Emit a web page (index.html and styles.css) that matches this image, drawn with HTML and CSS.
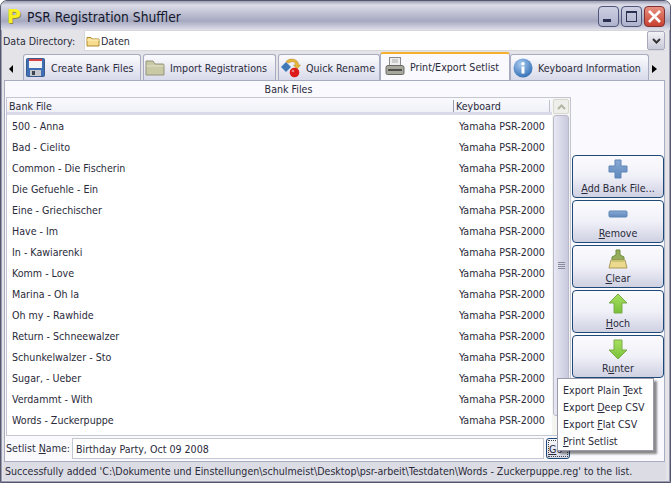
FILE: index.html
```html
<!DOCTYPE html>
<html lang="en">
<head>
<meta charset="utf-8">
<title>PSR Registration Shuffler</title>
<link rel="stylesheet" href="styles.css">
</head>
<body>
<div class="window">
  <header class="titlebar">
    <span class="app-logo">P</span>
    <span class="app-title">PSR Registration Shuffler</span>
    <div class="win-buttons">
      <span class="win-btn"><svg width="21" height="21" viewBox="0 0 21 21"><rect x="5" y="13" width="8" height="3" fill="#2a3050"/></svg></span>
      <span class="win-btn"><svg width="21" height="21" viewBox="0 0 21 21"><rect x="5.5" y="5.5" width="10" height="10" fill="none" stroke="#2a3050"/><rect x="5" y="5" width="11" height="2" fill="#2a3050"/></svg></span>
      <span class="win-btn close"><svg width="21" height="21" viewBox="0 0 21 21"><path d="M5 5l11 11M16 5L5 16" stroke="#fff" stroke-width="2.6"/></svg></span>
    </div>
  </header>
  <div class="dir-row">
    <span class="dir-label">Data Directory:</span>
    <div class="dir-combo">
      <svg class="dir-folder" width="14" height="12" viewBox="0 0 14 12"><path d="M1 2.5h4l1 1.5h7v7H1z" fill="#f6dc8c" stroke="#b08a2c"/><path d="M1 5h12" stroke="#fff3c4"/></svg>
      <span class="dir-value">Daten</span>
      <span class="combo-arrow"><svg width="9" height="6" viewBox="0 0 9 6"><path d="M1 1l3.5 3.5L8 1" fill="none" stroke="#333" stroke-width="2"/></svg></span>
    </div>
  </div>
  <nav class="tabs">
    <span class="tab-scroll"><svg width="5" height="8" viewBox="0 0 5 8"><path d="M4 0v8L0 4z" fill="#000"/></svg></span>
    <div class="tab t1">
      <svg width="19" height="19" viewBox="0 0 19 19"><rect x=".5" y=".5" width="18" height="18" rx="1" fill="#3f6fb5" stroke="#3a5a8c"/><rect x="3" y="1" width="13" height="9" fill="#f4f4f4"/><rect x="3" y="1" width="13" height="2" fill="#d8434a"/><rect x="4" y="12" width="11" height="6" fill="#c4c8cc"/><rect x="6" y="13" width="3" height="4" fill="#3c4450"/></svg>
      <span>Create Bank Files</span>
    </div>
    <div class="tab t2">
      <svg width="20" height="18" viewBox="0 0 20 18"><path d="M1 2h7l2 3h8a1 1 0 0 1 1 1v10H1z" fill="#c9c9a6" stroke="#94947a"/><path d="M1.500 7h17" stroke="#e2e2cc"/></svg>
      <span>Import Registrations</span>
    </div>
    <div class="tab t3">
      <svg width="20" height="20" viewBox="0 0 20 20"><path d="M5 4l5 5-5 5-5-5z" fill="#3f79b8"/><path d="M5 4a6 4 0 0 1 11-1q1.500 1.500 1.500 4l2 0-3.500 4-3.500-4 2 0q0-2-1.500-3a4 3 0 0 0-5 1z" fill="#e6b43a" stroke="#b08828" stroke-width=".5"/><circle cx="13.500" cy="14.500" r="4.800" fill="#dc1a1a"/><circle cx="12" cy="13" r="1.300" fill="#f08080"/></svg>
      <span>Quick Rename</span>
    </div>
    <div class="tab t4 active">
      <svg width="20" height="20" viewBox="0 0 20 20"><rect x="4.500" y="1.500" width="11" height="8" fill="#eee" stroke="#8a8a8a"/><path d="M7 4h6M7 6h6" stroke="#aaa"/><path d="M1 11.500a2 2 0 0 1 2-2h14a2 2 0 0 1 2 2V17a1.500 1.500 0 0 1-1.500 1.500h-15A1.500 1.500 0 0 1 1 17z" fill="#a8a89e" stroke="#6a6a64"/><rect x="3" y="13" width="14" height="2" fill="#50504c"/></svg>
      <span>Print/Export Setlist</span>
    </div>
    <div class="tab t5">
      <svg width="20" height="20" viewBox="0 0 20 20"><defs><radialGradient id="ig" cx="40%" cy="30%" r="75%"><stop offset="0" stop-color="#a9cbef"/><stop offset="1" stop-color="#2f6db5"/></radialGradient></defs><circle cx="10" cy="10" r="9.500" fill="url(#ig)"/><rect x="8.500" y="8.500" width="3" height="7" fill="#fff"/><circle cx="10" cy="5.800" r="1.700" fill="#fff"/></svg>
      <span>Keyboard Information</span>
    </div>
    <span class="tab-scroll right"><svg width="5" height="8" viewBox="0 0 5 8"><path d="M0 0v8l5-4z" fill="#000"/></svg></span>
  </nav>
  <main class="panel">
    <section class="left">
      <div class="group-title">Bank Files</div>
      <div class="listbox">
        <div class="list-main">
          <div class="list-head">
            <span class="col-file">Bank File</span>
            <span class="col-kb">Keyboard</span>
          </div>
          <ul class="rows">
            <li><span>500 - Anna</span><span class="kb">Yamaha PSR-2000</span></li>
            <li><span>Bad - Cielito</span><span class="kb">Yamaha PSR-2000</span></li>
            <li><span>Common - Die Fischerin</span><span class="kb">Yamaha PSR-2000</span></li>
            <li><span>Die Gefuehle - Ein</span><span class="kb">Yamaha PSR-2000</span></li>
            <li><span>Eine - Griechischer</span><span class="kb">Yamaha PSR-2000</span></li>
            <li><span>Have - Im</span><span class="kb">Yamaha PSR-2000</span></li>
            <li><span>In - Kawiarenki</span><span class="kb">Yamaha PSR-2000</span></li>
            <li><span>Komm - Love</span><span class="kb">Yamaha PSR-2000</span></li>
            <li><span>Marina - Oh la</span><span class="kb">Yamaha PSR-2000</span></li>
            <li><span>Oh my - Rawhide</span><span class="kb">Yamaha PSR-2000</span></li>
            <li><span>Return - Schneewalzer</span><span class="kb">Yamaha PSR-2000</span></li>
            <li><span>Schunkelwalzer - Sto</span><span class="kb">Yamaha PSR-2000</span></li>
            <li><span>Sugar, - Ueber</span><span class="kb">Yamaha PSR-2000</span></li>
            <li><span>Verdammt - With</span><span class="kb">Yamaha PSR-2000</span></li>
            <li><span>Words - Zuckerpuppe</span><span class="kb">Yamaha PSR-2000</span></li>
          </ul>
        </div>
        <div class="scrollbar">
          <span class="sb-up"><svg width="9" height="6" viewBox="0 0 9 6"><path d="M1 5l3.500-3.500L8 5" fill="none" stroke="#b5b5a5" stroke-width="2"/></svg></span>
          <span class="sb-thumb"><i></i><i></i><i></i><i></i></span>
        </div>
      </div>
      <div class="setlist-row">
        <label class="setlist-label">Setlist <u>N</u>ame:</label>
        <div class="setlist-input">Birthday Party, Oct 09 2008</div>
        <button class="go-btn"><u>G</u>o</button>
      </div>
    </section>
    <aside class="actions">
      <button class="action">
        <svg width="22" height="22" viewBox="0 0 22 22"><defs><linearGradient id="bl" x1="0" y1="0" x2="0" y2="1"><stop offset="0" stop-color="#8aaad4"/><stop offset="1" stop-color="#5f88bc"/></linearGradient></defs><path d="M8 2h6v6h6v6h-6v6H8v-6H2V8h6z" fill="url(#bl)" stroke="#5f86b8"/></svg>
        <span><u>A</u>dd Bank File...</span>
      </button>
      <button class="action">
        <svg width="22" height="22" viewBox="0 0 22 22"><rect x="2" y="8" width="18" height="6" rx="1" fill="url(#bl)" stroke="#5f86b8"/></svg>
        <span><u>R</u>emove</span>
      </button>
      <button class="action">
        <svg width="22" height="22" viewBox="0 0 22 22"><path d="M9 2h4v5l4 2v3H5V9l4-2z" fill="#96ae5c" stroke="#6f8a3c"/><path d="M4 12h14l2 8H2z" fill="#ecd98e" stroke="#a89a58"/><path d="M5 13h12" stroke="#c8c470" stroke-width="2"/></svg>
        <span><u>C</u>lear</span>
      </button>
      <button class="action">
        <svg width="22" height="22" viewBox="0 0 22 22"><defs><linearGradient id="gr" x1="0" y1="0" x2="0" y2="1"><stop offset="0" stop-color="#a8e060"/><stop offset="1" stop-color="#78c038"/></linearGradient></defs><path d="M11 1l9 9h-5v10H7V10H2z" fill="url(#gr)" stroke="#78ac48"/></svg>
        <span><u>H</u>och</span>
      </button>
      <button class="action">
        <svg width="22" height="22" viewBox="0 0 22 22"><path d="M7 2h8v10h5l-9 9-9-9h5z" fill="url(#gr)" stroke="#78ac48"/></svg>
        <span>R<u>u</u>nter</span>
      </button>
    </aside>
    <div class="menu">
      <div>Export Plain <u>T</u>ext</div>
      <div>Export <u>D</u>eep CSV</div>
      <div>Export <u>F</u>lat CSV</div>
      <div><u>P</u>rint Setlist</div>
    </div>
  </main>
  <footer class="status">
    <span>Successfully added 'C:\Dokumente und Einstellungen\schulmeist\Desktop\psr-arbeit\Testdaten\Words - Zuckerpuppe.reg' to the list.</span>
  </footer>
</div>
</body>
</html>
```
FILE: styles.css
```css
* { box-sizing: border-box; }
html, body { margin: 0; padding: 0; }
body {
  width: 671px;
  height: 483px;
  overflow: hidden;
  background: #fff;
  font-family: "DejaVu Sans Condensed", "DejaVu Sans", sans-serif;
  font-size: 10.6px;
  color: #2a2a3a;
}
u { text-decoration: underline; }
.window {
  width: 671px;
  height: 483px;
  display: flex;
  flex-direction: column;
  padding: 0 5px 2px 3px;
  background: #e4e4e8;
  border: 1px solid #55586c;
  border-radius: 7px 7px 0 0;
  box-shadow: inset 0 0 0 1px #9a9db2;
}
.titlebar {
  height: 29px;
  flex: none;
  margin: 0 -5px 0 -3px;
  padding: 0 5px 0 6px;
  display: flex;
  align-items: center;
  border-radius: 6px 6px 0 0;
  background: linear-gradient(#9c9fb6 0, #dcdde8 4px, #a6a8c0 20px, #dfe0ea 29px);
}
.app-logo {
  width: 18px;
  padding-top: 1px;
  font: bold 19px "DejaVu Sans", sans-serif;
  color: #f8f020;
  text-shadow: 1px 1px 0 #8c8c40;
}
.app-title {
  margin-left: 2px;
  padding-top: 2px;
  font-size: 13.7px;
  color: #14182c;
}
.win-buttons { margin-left: auto; display: flex; gap: 2px; padding-top: 1px; }
.win-btn {
  width: 21px;
  height: 21px;
  border: 1px solid #50567a;
  border-radius: 4px;
  background: linear-gradient(#cdd0e2, #aeb2cc);
  display: flex;
  align-items: center;
  justify-content: center;
}
.win-btn svg { flex: none; }
.close { background: linear-gradient(#e89080, #c84030); border-color: #803030; }
.dir-row {
  height: 21px;
  flex: none;
  display: flex;
  align-items: center;
}
.dir-label { width: 81px; margin-left: -1px; padding-top: 1px; }
.dir-combo {
  flex: 1;
  height: 21px;
  background: #fff;
  display: flex;
  align-items: center;
  border: 1px solid #d8d8dc;
  border-right: 0;
  padding-left: 1px;
}
.dir-value { margin-left: 1px; padding-top: 1px; }
.combo-arrow {
  margin-left: auto;
  width: 18px;
  height: 19px;
  display: flex;
  align-items: center;
  justify-content: center;
  background: linear-gradient(#f2f2f6, #c8cad8);
  border: 1px solid #a8aabc;
  border-radius: 2px;
}
.tabs {
  height: 29px;
  flex: none;
  display: flex;
  align-items: flex-end;
}
.tab-scroll {
  width: 19px;
  height: 24px;
  flex: none;
  padding: 4px 0 0 5px;
  align-self: flex-start;
  margin-top: 8px;
}
.tab-scroll.right { width: 14px; margin-left: 0; padding-left: 3px; }
.tab {
  height: 26px;
  display: flex;
  align-items: center;
  gap: 6px;
  padding-left: 2px;
  margin-right: 2px;
  border: 1px solid #a8acc0;
  border-bottom: 0;
  border-radius: 3px 3px 0 0;
  background: linear-gradient(#fbfbfe, #d8daea);
  white-space: nowrap;
  flex: none;
}
.tab span { padding-top: 1px; }
.t1 { width: 118px; }
.t2 { width: 133px; gap: 5px; padding-left: 1px; }
.t3 { width: 102px; margin-right: 0; padding-left: 2px; gap: 5px; }
.t4 { width: 130px; margin-right: 0; gap: 5px; padding-left: 4px; }
.t5 { width: 139px; margin-right: 0; gap: 5px; padding-left: 2px; }
.tab.active {
  height: 29px;
  padding-bottom: 3px;
  background: #fafafe;
  border-top: 2px solid #f5b030;
  border-bottom: 0;
  position: relative;
  margin-bottom: -1px;
}
.panel {
  flex: 1;
  min-height: 0;
  display: flex;
  gap: 1px;
  padding: 1px 0 2px 1px;
  background: #fafafe;
  border: 1px solid #a8acc0;
  position: relative;
}
.left { flex: 1; min-width: 0; display: flex; flex-direction: column; }
.group-title {
  height: 15px;
  flex: none;
  text-align: center;
  line-height: 15px;
}
.listbox {
  height: 339px;
  flex: none;
  display: flex;
  background: #fff;
  border: 1px solid #c4c6d2;
}
.list-main { flex: 1; min-width: 0; }
.list-head {
  height: 17px;
  display: flex;
  align-items: center;
  padding-top: 2px;
  background: linear-gradient(#fafafe, #f0f0f8);
  border-bottom: 3px solid #d8daea;
}
.col-file {
  width: 447px;
  flex: none;
  padding-left: 2px;
  border-right: 1px solid #9a9aaa;
  height: 12px;
  line-height: 12px;
}
.col-kb { padding-left: 2px; width: 96px; flex: none; border-right: 1px solid #c0c0cc; height: 12px; line-height: 12px; }
.rows { list-style: none; margin: 0; padding: 0; }
.rows li {
  height: 21px;
  display: flex;
  align-items: center;
  padding-left: 5px;
}
.rows .kb { margin-left: auto; width: 93px; white-space: nowrap; }
.scrollbar {
  width: 18px;
  flex: none;
  display: flex;
  flex-direction: column;
  background: #f4f4f0;
  padding: 0 1px;
}
.sb-up {
  height: 15px;
  flex: none;
  margin-top: 1px;
  display: flex;
  align-items: center;
  justify-content: center;
  background: #eeeeea;
  border: 1px solid #d8d8d0;
  border-radius: 2px;
}
.sb-thumb {
  height: 301px;
  margin-top: 1px;
  display: flex;
  flex-direction: column;
  align-items: center;
  justify-content: center;
  gap: 1px;
  background: linear-gradient(90deg, #e8e8f4, #c8c9dc);
  border: 1px solid #b8bacc;
  border-radius: 3px;
}
.sb-thumb i { width: 7px; height: 1px; background: #8a8ca0; }
.setlist-row {
  flex: 1;
  display: flex;
  align-items: flex-start;
  padding: 2px 1px 0 0;
}
.setlist-label { width: 66px; flex: none; padding-top: 4px; white-space: nowrap; }
.setlist-input {
  flex: 1;
  height: 21px;
  line-height: 20px;
  padding-left: 3px;
  background: #fff;
  border: 1px solid #c4c6d2;
}
.go-btn {
  width: 24px;
  height: 21px;
  margin-left: 2px;
  padding: 0 0 0 2px;
  flex: none;
  font: inherit;
  color: #2a2a3a;
  text-align: left;
  background: linear-gradient(#f8f8fc, #d8daea);
  border: 1px solid #1f4a78;
  border-radius: 3px;
  outline: 1px dotted #444;
  outline-offset: -3px;
}
.actions {
  width: 92px;
  flex: none;
  display: flex;
  flex-direction: column;
  gap: 2px;
  padding-top: 73px;
}
.action {
  height: 43px;
  padding: 0;
  display: flex;
  flex-direction: column;
  align-items: center;
  justify-content: flex-end;
  font: inherit;
  color: #2a2a3a;
  background: linear-gradient(#fbfbfe, #f0f0f8 50%, #cfd1e2);
  border: 1px solid #1f4a78;
  border-radius: 4px;
}
.action svg { flex: none; margin-bottom: 1px; }
.action span { line-height: 14px; margin-bottom: 2px; }
.menu {
  position: absolute;
  left: 552px;
  top: 297px;
  width: 97px;
  height: 73px;
  padding: 3px 0 0 5px;
  background: #fff;
  border: 1px solid #9a9aaa;
  box-shadow: 3px 3px 2px rgba(0,0,0,.45);
  line-height: 17px;
  white-space: nowrap;
}
.status {
  height: 18px;
  flex: none;
  margin: 0 -1px;
  padding: 0 0 1px 2px;
  display: flex;
  align-items: center;
  background: #dcdde4;
  white-space: nowrap;
  overflow: hidden;
}
```
